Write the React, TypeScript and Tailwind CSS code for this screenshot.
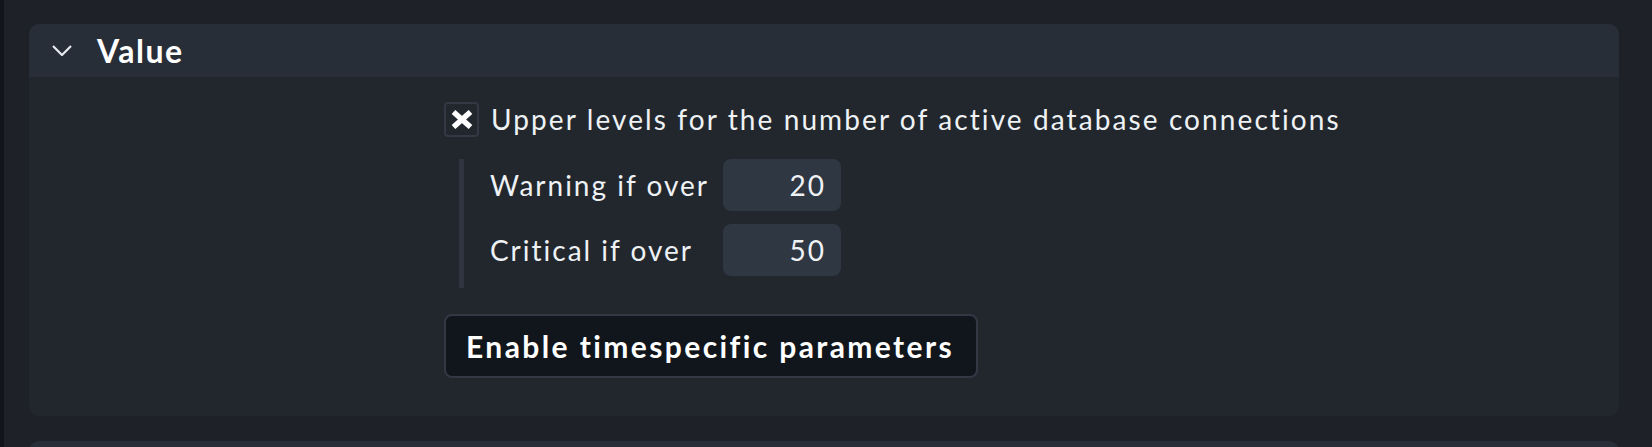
import React from 'react';

const font = { fontFamily: 'Lato, "Noto Sans", sans-serif' };

const Chevron: React.FC = () => (
  <svg width="20" height="11" viewBox="0 0 20 11" fill="none">
    <polyline points="1,1 10,10 19,1" stroke="#e6eaee" strokeWidth="2.2" strokeLinejoin="miter" />
  </svg>
);

const CrossMark: React.FC = () => (
  <svg width="22" height="19" viewBox="0 0 22 19">
    <line x1="2.5" y1="2" x2="19.5" y2="17" stroke="#ffffff" strokeWidth="5.5" />
    <line x1="19.5" y1="2" x2="2.5" y2="17" stroke="#ffffff" strokeWidth="5.5" />
  </svg>
);

const LevelRow: React.FC<{ label: string; value: string }> = ({ label, value }) => (
  <div className="flex items-center h-[52px]">
    <div className="w-[233px] text-[28px] tracking-[2px] text-[#eef2f5] leading-none">{label}</div>
    <div className="w-[118px] h-[52px] rounded-[8px] bg-[#2f3742] flex items-center justify-end pr-[15px] text-[28px] tracking-[2px] text-[#eef2f5]">
      {value}
    </div>
  </div>
);

const App: React.FC = () => (
  <div className="w-[1652px] h-[447px] overflow-hidden bg-[#1e2128] flex" style={font}>
    <div className="w-[4px] bg-[#12161c]" />
    <div className="flex-1 pl-[25px] pr-[33px] pt-[24px]">
      <div className="rounded-[10px] bg-[#22272e] overflow-hidden">
        <div className="h-[53px] bg-[#282e38] flex items-center pl-[23px]">
          <Chevron />
          <span className="ml-[25px] text-[32px] font-bold tracking-[1.5px] text-white leading-none">Value</span>
        </div>
        <div className="h-[339px] pl-[415px] pt-[25px]">
          <div className="flex items-center h-[35px]">
            <div className="w-[35px] h-[35px] rounded-[4px] border-2 border-[#323944] flex items-center justify-center">
              <CrossMark />
            </div>
            <span className="ml-[12px] -mt-[2px] text-[28px] tracking-[2.1px] text-[#eef2f5] leading-none">
              Upper levels for the number of active database connections
            </span>
          </div>
          <div className="flex mt-[22px]">
            <div className="ml-[15px] w-[5px] bg-[#2f3540]" />
            <div className="pl-[26px] pb-[12px] flex flex-col gap-[13px]">
              <LevelRow label="Warning if over" value="20" />
              <LevelRow label="Critical if over" value="50" />
            </div>
          </div>
          <button className="mt-[26px] w-[534px] h-[64px] rounded-[8px] border-2 border-[#323944] bg-[#11161c] pl-[20px] text-left text-[30px] font-bold tracking-[2.4px] text-white leading-none">
            Enable timespecific parameters
          </button>
        </div>
      </div>
      <div className="mt-[25px] h-[20px] rounded-t-[10px] bg-[#282e38]" />
    </div>
  </div>
);

export default App;
